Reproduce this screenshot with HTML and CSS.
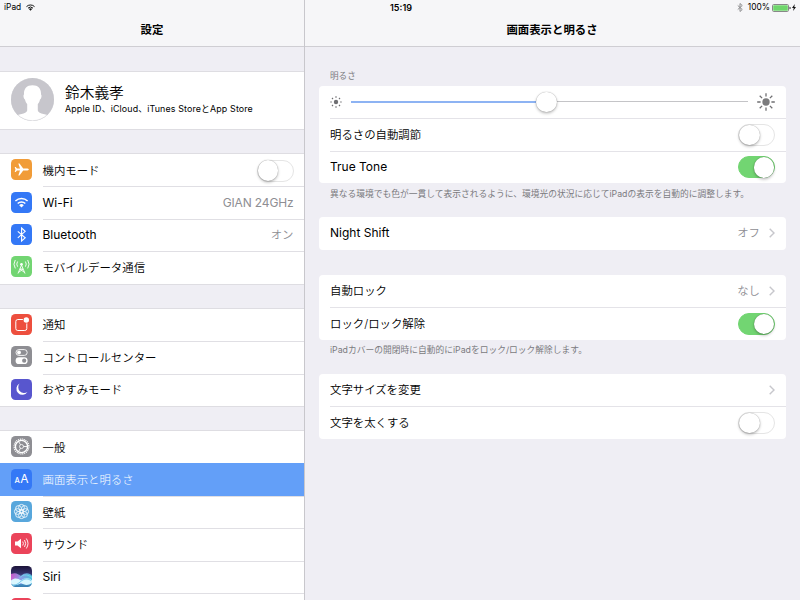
FILE: index.html
```html
<!DOCTYPE html>
<html lang="ja">
<head>
  <meta charset="UTF-8">
  <meta name="viewport" content="width=device-width, initial-scale=1.0">
  <title>設定</title>
  <link rel="stylesheet" href="styles.css">
</head>
<body>
  <div class="statusbar">
    <div class="status-left">
      <span>iPad</span>
      <svg width="9" height="7" viewBox="0 0 18 14" fill="none" stroke="#111" stroke-width="2"><path d="M1 5.2a11.5 11.5 0 0 1 16 0M4 8.3a7.2 7.2 0 0 1 10 0"/><path d="M9 13.5L5.8 10.2a4.7 4.7 0 0 1 6.4 0z" fill="#111" stroke="none"/></svg>
    </div>
    <div class="status-time">15:19</div>
    <div class="status-right">
      <svg class="status-bt" width="6" height="9" viewBox="0 0 12 18" fill="none" stroke="#8a8a8c" stroke-width="1.900"><path d="M1.500 5l9 8L6 17V1l4.500 4-9 8"/></svg>
      <span>100%</span>
      <svg class="battery" width="19" height="8" viewBox="0 0 19 8"><rect x=".5" y=".5" width="16" height="7" rx="1.200" fill="#fff" stroke="#888"/><rect x="1.200" y="1.200" width="14.600" height="5.600" rx=".5" fill="#6fd66c"/><path d="M17.500 2.700q1.300.2 1.300 1.300t-1.300 1.300z" fill="#333"/></svg>
      <svg width="4" height="7" viewBox="0 0 4 7"><path d="M2.800 0L0 4h1.700L1.100 7 4 2.900H2.300z" fill="#111"/></svg>
    </div>
  </div>

  <div class="split">
    <div class="sidebar">
      <div class="navbar">設定</div>

      <div class="group profile">
        <svg class="avatar" width="43" height="43" viewBox="0 0 43 43">
          <defs><clipPath id="face"><circle cx="21.500" cy="21.500" r="21.500"/></clipPath></defs>
          <circle cx="21.500" cy="21.500" r="21.500" fill="#c7c6cc"/>
          <g clip-path="url(#face)"><path d="M21.500 7.300c6 0 8.800 3.500 8.500 9.200 1 .5.500 4.500-1 5-.4 2-1.300 3.500-2.200 4.600v6.400c.3 1.900 3 2.900 5.600 3.500 3 .7 5.600 1.100 7 2V44H4v-6c1.400-.9 3.600-1.300 6.600-2 2.600-.6 5.300-1.600 5.600-3.500v-6.400c-.9-1.100-1.800-2.600-2.200-4.600-1.500-.5-2-4.500-1-5-.3-5.700 2.500-9.200 8.500-9.200z" fill="#fff"/></g>
          <circle cx="21.500" cy="21.500" r="21.200" fill="none" stroke="#c7c6cc" stroke-width=".5"/>
        </svg>
        <div>
          <div class="profile-name">鈴木義孝</div>
          <div class="profile-sub">Apple ID、iCloud、iTunes StoreとApp Store</div>
        </div>
      </div>

      <div class="group">
        <div class="item">
          <svg class="icon orange" viewBox="0 0 21 21"><path d="M17.800 10.500c0 .7-1 1-2.200 1h-3.400l-3.700 5H7.300l1.700-5H6l-1.300 1.600H3.700l.8-2.600-.8-2.600h1L6 9.500h3l-1.700-5h1.200l3.700 5h3.400c1.200 0 2.200.3 2.200 1z" fill="#fff"/></svg>
          <div class="cell ja"><span>機内モード</span><span class="switch"></span></div>
        </div>
        <div class="item">
          <svg class="icon blue" viewBox="0 0 21 21" fill="none" stroke="#fff" stroke-width="1.500"><path d="M4.400 9a8.900 8.900 0 0 1 12.200 0M6.700 11.500a5.500 5.500 0 0 1 7.600 0"/><path d="M10.500 15.600l-2.300-2.400a3.300 3.300 0 0 1 4.600 0z" fill="#fff" stroke="none"/></svg>
          <div class="cell"><span>Wi-Fi</span><span class="value network">GIAN 24GHz</span></div>
        </div>
        <div class="item">
          <svg class="icon blue" viewBox="0 0 21 21" fill="none" stroke="#fff" stroke-width="1.100"><path d="M6.800 7.300l7.400 6.500-3.600 3.200V4l3.600 3.300-7.400 6.500"/></svg>
          <div class="cell"><span>Bluetooth</span><span class="value ja">オン</span></div>
        </div>
        <div class="item">
          <svg class="icon green" viewBox="0 0 21 21" fill="none" stroke="#fff" stroke-width=".9"><path d="M10.500 9L7 17.500M10.500 9l3.500 8.500M8.900 13l4.300 3.200M12.100 13l-4.300 3.200M9 13h3M6.600 5.500q-1.700 2.600 0 5.200M14.400 5.500q1.700 2.600 0 5.200M4.300 4q-2.700 4.200 0 8.400M16.700 4q2.700 4.200 0 8.400"/><circle cx="10.500" cy="8.200" r="1.300" fill="#fff" stroke="none"/></svg>
          <div class="cell ja"><span>モバイルデータ通信</span></div>
        </div>
      </div>

      <div class="group">
        <div class="item">
          <svg class="icon red" viewBox="0 0 21 21"><rect x="4.800" y="5.500" width="11" height="11" rx="2" fill="none" stroke="#fff"/><circle cx="15.300" cy="6" r="3.500" fill="#ed4f3e"/><circle cx="15.300" cy="6" r="2.700" fill="#fff"/></svg>
          <div class="cell ja"><span>通知</span></div>
        </div>
        <div class="item">
          <svg class="icon gray" viewBox="0 0 21 21"><rect x="5" y="3.600" width="11.200" height="5.800" rx="2.900" fill="none" stroke="#fff" stroke-width=".9"/><circle cx="8" cy="6.500" r="1.900" fill="#fff"/><rect x="4.600" y="11.300" width="12" height="6.700" rx="3.350" fill="#fff"/><circle cx="13.200" cy="14.650" r="2.100" fill="#8e8e93"/></svg>
          <div class="cell ja"><span>コントロールセンター</span></div>
        </div>
        <div class="item">
          <svg class="icon purple" viewBox="0 0 21 21"><path d="M8.600 4.500a6 6 0 1 0 8 8.300 5.800 5.800 0 0 1-8-8.300z" fill="#fff"/></svg>
          <div class="cell ja"><span>おやすみモード</span></div>
        </div>
      </div>

      <div class="group">
        <div class="item">
          <svg class="icon gray" viewBox="0 0 21 21" fill="none" stroke="#fff"><circle cx="10.500" cy="10.500" r="7.400" stroke-width="1.300" stroke-dasharray="1.100 .837"/><circle cx="10.500" cy="10.500" r="6.100" stroke-width="1.400"/><circle cx="10.500" cy="10.500" r="2" stroke-width=".8"/><path d="M12.500 10.500h4M9.500 8.800l-2-3.500M9.500 12.200l-2 3.500" stroke-width=".9"/></svg>
          <div class="cell ja"><span>一般</span></div>
        </div>
        <div class="item selected">
          <svg class="icon blue" viewBox="0 0 21 21" fill="#fff"><text class="aa-small" x="3.500" y="14.400">A</text><text class="aa-large" x="9.300" y="14.400">A</text></svg>
          <div class="cell ja"><span>画面表示と明るさ</span></div>
        </div>
        <div class="item">
          <svg class="icon sky" viewBox="0 0 21 21" fill="none" stroke="#fff" stroke-width=".8">
            <circle cx="10.500" cy="10.500" r="1.800"/>
            <circle cx="10.500" cy="6.300" r="2.900"/><circle cx="13.500" cy="7.500" r="2.900"/><circle cx="14.700" cy="10.500" r="2.900"/><circle cx="13.500" cy="13.500" r="2.900"/><circle cx="10.500" cy="14.700" r="2.900"/><circle cx="7.500" cy="13.500" r="2.900"/><circle cx="6.300" cy="10.500" r="2.900"/><circle cx="7.500" cy="7.500" r="2.900"/>
          </svg>
          <div class="cell ja"><span>壁紙</span></div>
        </div>
        <div class="item">
          <svg class="icon pink" viewBox="0 0 21 21" fill="none" stroke="#fff" stroke-width=".9"><path d="M4 8.500h2.500l3.500-2.700v9.400l-3.500-2.700H4z" fill="#fff" stroke="none"/><path d="M11.700 8.500q1.400 2 0 4M13.500 7q2.400 3.500 0 7M15.300 5.500q3.400 5 0 10"/></svg>
          <div class="cell ja"><span>サウンド</span></div>
        </div>
        <div class="item">
          <svg class="icon" viewBox="0 0 21 21">
            <defs>
              <linearGradient id="night" x1="0" y1="0" x2="0" y2="1"><stop offset="0" stop-color="#1c1338"/><stop offset=".35" stop-color="#33306b"/><stop offset=".75" stop-color="#5aa4d8"/><stop offset="1" stop-color="#357cae"/></linearGradient>
              <linearGradient id="wave" x1="0" y1="0" x2="1" y2="0"><stop offset="0" stop-color="#e05bd6"/><stop offset=".5" stop-color="#93a5f3"/><stop offset="1" stop-color="#51cfe5"/></linearGradient>
            </defs>
            <rect width="21" height="21" fill="url(#night)"/>
            <path d="M0 8c5-2 7 0 10 2 4-4 9-3 11 0v8H0z" fill="url(#wave)" opacity=".85"/>
            <path d="M8 12.500c5-6 10-3 13-1" fill="none" stroke="#70dff0" stroke-width=".8"/>
            <path d="M0 14.500c4-3 7-2 10 0 4-3 8-3 11 0v2.500c-4 3-8 2-11 0-3 2-6 2.500-10 1z" fill="#d9f7ff"/>
            <path d="M1 19.500c6-.5 7-3 10-5s6-2 9 0" fill="none" stroke="#73c9ec"/>
          </svg>
          <div class="cell"><span>Siri</span></div>
        </div>
        <div class="item">
          <svg class="icon pink" viewBox="0 0 21 21"></svg>
          <div class="cell"></div>
        </div>
      </div>
    </div>

    <div class="main">
      <div class="navbar">画面表示と明るさ</div>

      <div class="content">
        <div class="caption">明るさ</div>
        <div class="card">
          <div class="row brightness">
            <svg width="12" height="12" viewBox="-6 -6 12 12" stroke="#6f6f72" stroke-width="1.200"><circle r="2.200" fill="#6f6f72" stroke="none"/><path d="M0-5.700v1.500M0 4.200v1.500M-5.700 0h1.500M4.200 0h1.500M-4-4l1 1M3 3l1 1M-4 4l1-1M3-3l1-1"/></svg>
            <div class="slider"><div class="slider-fill"></div><div class="knob"></div></div>
            <svg width="18" height="18" viewBox="-9 -9 18 18" stroke="#6f6f72" stroke-width="1.300"><circle r="3.700" fill="#7b7b7d" stroke="none"/><path d="M0-8.800v3.400M0 5.400v3.400M-8.800 0h3.400M5.400 0h3.400M-6.300-6.300l2.400 2.400M3.900 3.900l2.400 2.400M-6.300 6.300l2.400-2.400M3.900-3.900l2.400-2.400"/></svg>
          </div>
          <div class="row ja"><span>明るさの自動調節</span><span class="switch"></span></div>
          <div class="row"><span>True Tone</span><span class="switch on"></span></div>
        </div>
        <div class="note">異なる環境でも色が一貫して表示されるように、環境光の状況に応じてiPadの表示を自動的に調整します。</div>

        <div class="card">
          <div class="row"><span>Night Shift</span><span class="value ja">オフ</span><svg class="chevron" viewBox="0 0 6 10"><path d="M.7.700L5 5 .7 9.300"/></svg></div>
        </div>

        <div class="card spaced">
          <div class="row ja"><span>自動ロック</span><span class="value">なし</span><svg class="chevron" viewBox="0 0 6 10"><path d="M.7.700L5 5 .7 9.300"/></svg></div>
          <div class="row ja"><span>ロック/ロック解除</span><span class="switch on"></span></div>
        </div>
        <div class="note">iPadカバーの開閉時に自動的にiPadをロック/ロック解除します。</div>

        <div class="card">
          <div class="row ja"><span>文字サイズを変更</span><svg class="chevron" viewBox="0 0 6 10"><path d="M.7.700L5 5 .7 9.300"/></svg></div>
          <div class="row ja"><span>文字を太くする</span><span class="switch"></span></div>
        </div>
      </div>
    </div>
  </div>
</body>
</html>
```
FILE: styles.css
```css
* {
  box-sizing: border-box;
}

body {
  margin: 0;
  width: 800px;
  height: 600px;
  overflow: hidden;
  position: relative;
  background: #efeef4;
  color: #000;
  font-family: Inter, "Noto Sans CJK JP", sans-serif;
  font-size: 12px;
  line-height: 16px;
}

svg {
  display: block;
  flex-shrink: 0;
}

/* status bar lies over both nav bars */
.statusbar {
  position: absolute;
  top: 0;
  left: 0;
  width: 100%;
  height: 15px;
  padding: 0 4px;
  display: grid;
  grid-template-columns: 1fr auto 1fr;
  align-items: center;
  font-size: 8.4px;
  line-height: 15px;
}

.status-left,
.status-right {
  display: flex;
  align-items: center;
}

.status-left {
  gap: 5px;
}

.status-time {
  font-weight: 600;
  font-size: 9px;
  padding-left: 2px;
}

.status-right {
  justify-content: flex-end;
}

.status-bt {
  margin-right: 5px;
}

.battery {
  margin: 0 1px 0 2px;
}

.split {
  display: flex;
  height: 600px;
}

.sidebar {
  width: 305px;
  border-right: 1px solid #c8c7cc;
  overflow: hidden;
}

.main {
  flex: 1;
}

.navbar {
  height: 47px;
  padding-top: 14px;
  border-bottom: 1px solid #cfced3;
  background: #f6f6f8;
  font-size: 11.4px;
  font-weight: 700;
  line-height: 33.5px;
  text-align: center;
}

.main .navbar {
  padding-right: 1px;
}

.ja {
  font-size: 11.4px;
  font-weight: 350;
}

/* sidebar */
.group {
  margin-bottom: 25.2px;
  background: #fff;
  box-shadow: 0 -1px 0 #dedde2, 0 1px 0 #dedde2;
}

.profile {
  display: flex;
  align-items: center;
  gap: 11px;
  height: 56.8px;
  margin-top: 25px;
  padding-left: 11px;
}

.profile .avatar {
  margin-top: -1px;
}

.profile-name {
  font-size: 14.7px;
  font-weight: 350;
  line-height: 18px;
}

.profile-sub {
  font-size: 8.9px;
  letter-spacing: 0.13px;
  line-height: 14px;
}

.item {
  display: flex;
  align-items: center;
  gap: 10.5px;
  height: 32.4px;
  padding-left: 11px;
}

.icon {
  width: 21px;
  height: 21px;
  margin-top: -1px;
  border-radius: 4.5px;
}

.orange { background: #f19c38; }
.blue { background: #3478f6; }
.green { background: #72d572; }
.red { background: #ed4f3e; }
.gray { background: #8e8e93; }
.purple { background: #5856ce; }
.sky { background: #58a7dc; }
.pink { background: #eb445a; }

.aa-small {
  font-size: 7.5px;
  font-weight: 500;
}

.aa-large {
  font-size: 12px;
  font-weight: 400;
}

.cell {
  flex: 1;
  display: flex;
  align-items: center;
  justify-content: space-between;
  height: 100%;
  padding-right: 10.5px;
  border-top: 1px solid #e0dfe4;
}

.item:first-child .cell {
  border-top-color: transparent;
}

.selected {
  background: #639ff8;
  color: #fff;
}

.selected .cell {
  border-top-color: transparent;
  font-weight: 300;
}

.value {
  color: #8e8e93;
}

.network {
  letter-spacing: -0.15px;
}

/* right pane */
.content {
  padding: 22px 14.5px 0 14px;
}

.caption {
  height: 17px;
  padding-left: 11px;
  color: #7b7b80;
  font-size: 8.6px;
  line-height: 14px;
}

.card {
  background: #fff;
  border-radius: 4px;
}

.spaced {
  margin-top: 25.2px;
}

.row {
  display: flex;
  align-items: center;
  height: 32.4px;
  margin-left: 11px;
  padding-right: 10.5px;
  border-top: 1px solid #e4e3e8;
}

.row:first-child {
  border-top: none;
}

.row .value,
.row .switch,
.row > span + .chevron {
  margin-left: auto;
}

.row .value + .chevron {
  margin-left: 9px;
}

.note {
  height: 34.1px;
  padding: 3.5px 0 0 11px;
  color: #7b7b80;
  font-size: 8.75px;
  line-height: 15px;
}

.chevron {
  width: 6px;
  height: 10px;
  fill: none;
  stroke: #c7c7cc;
  stroke-width: 1.4;
}

.switch {
  display: flex;
  align-items: center;
  width: 37px;
  height: 22px;
  border: 1px solid #e5e5e5;
  border-radius: 11px;
  background: #fff;
}

.switch::before {
  content: "";
  width: 20.5px;
  height: 20.5px;
  border-radius: 50%;
  background: #fff;
  box-shadow: 0 1.5px 3px rgba(0, 0, 0, 0.25), 0 0 1px rgba(0, 0, 0, 0.4);
}

.switch.on {
  justify-content: flex-end;
  border-color: #72d572;
  background: #72d572;
}

.brightness {
  gap: 9px;
}

.slider {
  flex: 1;
  display: flex;
  align-items: center;
  height: 22px;
  background: linear-gradient(#c4c4c7, #c4c4c7) 0 10px / 100% 1px no-repeat;
}

.slider-fill {
  width: 185px;
  height: 2px;
  margin-top: -1px;
  background: #8db3f3;
}

.knob {
  width: 20.5px;
  height: 20.5px;
  border-radius: 50%;
  background: #fff;
  box-shadow: 0 1.5px 3px rgba(0, 0, 0, 0.25), 0 0 1px rgba(0, 0, 0, 0.4);
}
```
